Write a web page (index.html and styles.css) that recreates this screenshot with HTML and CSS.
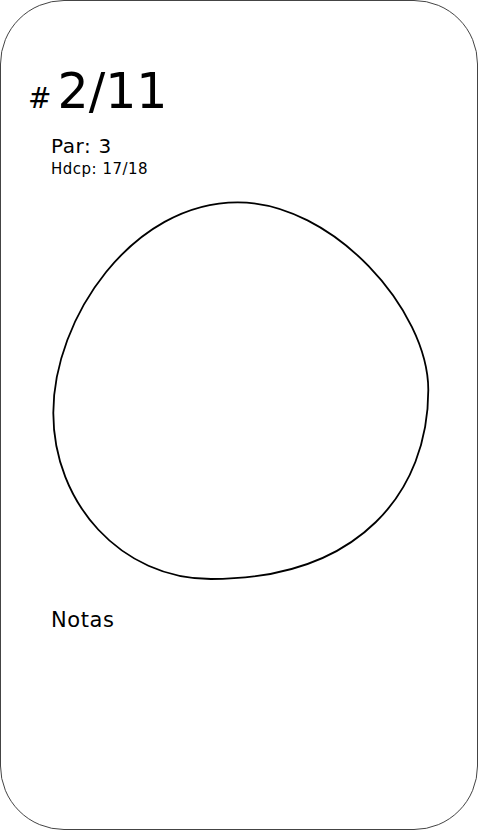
FILE: index.html
```html
<!DOCTYPE html>
<html lang="es">
<head>
  <meta charset="UTF-8" />
  <title>Hoyo 2</title>
  <link rel="stylesheet" href="styles.css">
</head>
<body>
  <div class="card">
    <div class="hole">
      <span class="hole-hash">#</span>
      <span class="hole-num">2/11</span>
    </div>
    <div class="info">
      <p class="par">Par: 3</p>
      <p class="hdcp">Hdcp: 17/18</p>
    </div>

    <!-- Green outline -->
    <svg class="green" width="380" height="382" viewBox="50 200 380 382">
      <path d="M236.7 202.3
               C331.7 202.3 427.3 310 427.3 390
               C427.3 490 360 579 210 579
               C120 579 52.3 503 52.3 413
               C52.3 318 131.7 202.3 236.7 202.3 Z"
            fill="none" stroke="#000" stroke-width="1.8" />
    </svg>

    <p class="notes">Notas</p>
  </div>
</body>
</html>
```

FILE: styles.css
```css
html, body {
  margin: 0;
  padding: 0;
}
body {
  font-family: "DejaVu Sans", sans-serif;
  color: #000;
  background: #fff;
}
.card {
  box-sizing: border-box;
  width: 478px;
  height: 830px;
  border: 1px solid #444;
  border-radius: 64px;
  padding: 66px 0 0 27px;
}
.hole {
  display: flex;
  align-items: baseline;
  gap: 6px;
  line-height: 1;
}
.hole-hash {
  font-size: 28px;
}
.hole-num {
  font-size: 49px;
}
.info {
  margin: 20px 0 0 23px;
}
.info p {
  margin: 0;
  line-height: 1;
}
.par {
  font-size: 20px;
  letter-spacing: 0.6px;
}
.hdcp {
  font-size: 15px;
  letter-spacing: 0.5px;
  margin-top: 6px !important;
}
.green {
  display: block;
  margin: 23px 0 0 23px;
}
.notes {
  margin: 28px 0 0 23px;
  font-size: 21px;
  letter-spacing: 0.6px;
  line-height: 1;
}
```
